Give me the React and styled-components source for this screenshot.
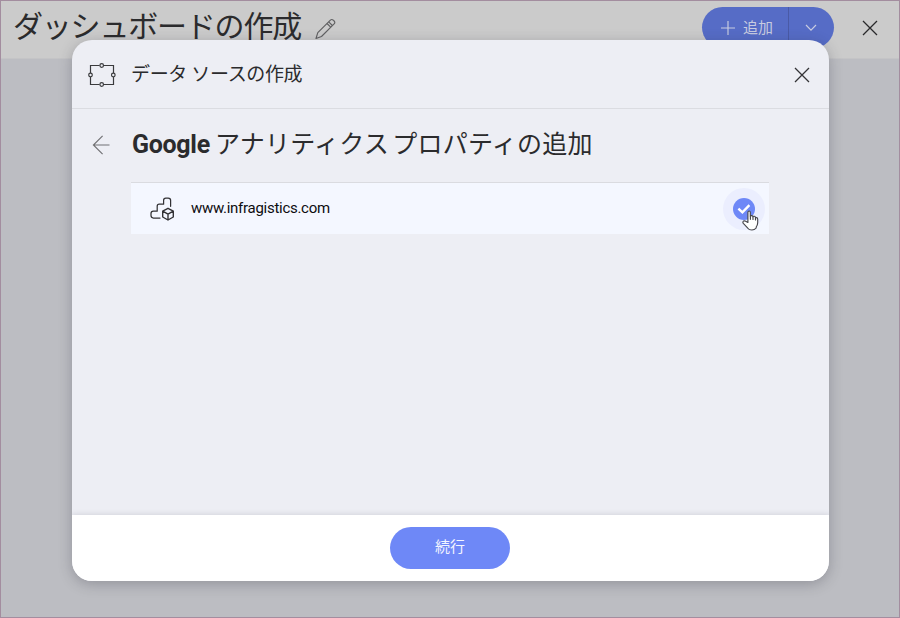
import React from "react";
import styled, { createGlobalStyle } from "styled-components";

const Global = createGlobalStyle`
  *, *::before, *::after { box-sizing: border-box; }
  body { margin: 0; font-family: Roboto, "Noto Sans CJK JP", sans-serif; color: #2b2b2d; }
`;

const Page = styled.div`
  position: relative;
  width: 900px;
  height: 618px;
  overflow: hidden;
  border: 1px solid #a38d9f;
  background: #bcbdc2;
`;

const TopBar = styled.header`
  display: flex;
  align-items: flex-start;
  height: 58px;
  padding: 0 20px 0 12px;
  background: #cbcbcb;
  border-bottom: 1px solid #c4c4c6;
`;

const Label = styled.span`
  display: block;
  white-space: nowrap;
  font-size: ${(p) => p.$size}px;
  line-height: ${(p) => p.$line}px;
  font-weight: ${(p) => p.$weight || 400};
  letter-spacing: ${(p) => p.$track || 0}px;
  word-spacing: ${(p) => p.$wordGap || 0}px;
  color: ${(p) => p.$color || "#2b2b2d"};
`;

const PageTitle = styled.h1`
  margin: 4px 0 0;
  width: 302px;
  font-weight: 400;
`;

const EditButton = styled.span`
  display: flex;
  margin-top: 17px;
`;

const SplitButton = styled.div`
  display: flex;
  width: 132px;
  height: 41px;
  margin: 6px 0 0 auto;
  border-radius: 21px;
  background: #566cc6;
  overflow: hidden;
`;

const AddPart = styled.div`
  display: flex;
  align-items: center;
  gap: 8px;
  width: 87px;
  padding-left: 19px;
  border-right: 1px solid #4a5aa6;
`;

const MenuPart = styled.div`
  display: flex;
  flex: 1;
  align-items: center;
  justify-content: center;
  padding: 1px 1px 0 0;
`;

const PageClose = styled.span`
  display: flex;
  margin: 18px 0 0 27px;
`;

const Dialog = styled.section`
  position: absolute;
  left: 71px;
  top: 39px;
  display: flex;
  flex-direction: column;
  width: 757px;
  height: 541px;
  border-radius: 20px;
  overflow: hidden;
  background: #edeef4;
  box-shadow: 0 3px 14px rgba(40, 40, 55, 0.28);
`;

const DialogHeader = styled.header`
  display: flex;
  align-items: center;
  height: 68px;
  padding: 1px 18px 0 16px;
  flex: none;
`;

const DialogTitle = styled.div`
  flex: 1;
  margin: 0 0 0 15px;
`;

const DialogBody = styled.div`
  flex: 1;
  border-top: 1px solid #dbdce1;
  padding: 16px 60px 0 19px;
`;

const Heading = styled.div`
  display: flex;
  align-items: center;
  height: 40px;
`;

const HeadingText = styled.h2`
  display: flex;
  align-items: baseline;
  gap: 5px;
  margin: -1px 0 0 21px;
`;

const PropertyRow = styled.div`
  display: flex;
  align-items: center;
  height: 52px;
  margin: 17px 0 0 40px;
  padding: 0 4px 0 19px;
  border-top: 1px solid #dadbe0;
  background: #f4f7ff;
`;

const PropertyName = styled.div`
  flex: 1;
  margin: -2px 0 0 16px;
`;

const CheckHalo = styled.div`
  position: relative;
  display: flex;
  align-items: center;
  justify-content: center;
  width: 42px;
  height: 42px;
  border-radius: 50%;
  background: #ebeefe;
`;

const Pointer = styled.svg`
  position: absolute;
  left: 19px;
  top: 22px;
`;

const DialogFooter = styled.footer`
  display: flex;
  flex: none;
  height: 66px;
  padding: 12px 2px 0 0;
  justify-content: center;
  align-items: flex-start;
  background: #fff;
  box-shadow: 0 -1px 5px rgba(60, 60, 80, 0.14);
`;

const ContinueButton = styled.button`
  display: flex;
  align-items: center;
  justify-content: center;
  width: 120px;
  height: 42px;
  padding: 0 0 3px 1px;
  border: 0;
  border-radius: 21px;
  background: #6e88f7;
  font-family: inherit;
`;

const Cross = ({ color = "#333336" }) => (
  <svg width="18" height="18" viewBox="0 0 18 18" fill="none" stroke={color} strokeWidth="1.3">
    <path d="M2 2 16 16M16 2 2 16" />
  </svg>
);

const Pencil = () => (
  <svg width="21" height="22" viewBox="0 0 21 22" fill="none" stroke="#606062" strokeWidth="1.15" strokeLinejoin="round">
    <path d="M1 20.5 2.8 14.7 15.4 2.1Q16.8.9 18.3 2.2L19.1 3Q20.5 4.5 19.1 5.9L6.5 18.5Z" />
    <path d="M13.7 3.8 17.4 7.5M12 5.5 15.7 9.2" />
  </svg>
);

const DataSourceIcon = () => (
  <svg width="28" height="26" viewBox="0 0 28 26" fill="none" stroke="#3a3a3c" strokeWidth="1.2">
    <path d="M11.5 3.5H2.5V11M2.5 15V22.5H11.5M16 22.5H25.5V15M25.5 11V3.5H16" />
    <circle cx="13.7" cy="3.5" r="1.8" />
    <circle cx="2.5" cy="13" r="1.8" />
    <circle cx="25.3" cy="13" r="1.8" />
    <circle cx="13.7" cy="22.5" r="1.8" />
  </svg>
);

const BackArrow = () => (
  <svg width="20" height="22" viewBox="0 0 20 22" fill="none" stroke="#717174" strokeWidth="1.15">
    <path d="M18.5 11H2.5M11.6 1.8 2.4 11 11.6 20.2" />
  </svg>
);

const PropertyIcon = () => (
  <svg width="25" height="24" viewBox="0 0 25 24" fill="none" stroke="#333336" strokeWidth="1.25" strokeLinejoin="round" strokeLinecap="round">
    <path d="M10 21H3.4Q1 21 1 18.6V16.6Q1 14.2 3.4 14.2H7.2V9.2Q7.2 7.2 9.2 7.2H13.6V3.2Q13.6 1 15.8 1H18.2Q20.6 1 20.6 3.2V9.3" />
    <path d="M18 11.3 23.3 14.2V20L18 23 12.7 20V14.2ZM12.7 14.2 18 17.1 23.3 14.2M18 17.1V23" strokeWidth="1.4" />
  </svg>
);

const CheckBadge = () => (
  <svg width="22" height="22" viewBox="0 0 22 22" fill="none">
    <circle cx="11" cy="11" r="11" fill="#6e88f7" />
    <path d="m5.4 10.6 4 3.7 7-7.1" stroke="#fff" strokeWidth="2.4" />
  </svg>
);

const HandPointer = () => (
  <Pointer width="17" height="21" viewBox="0 0 17 21" fill="#fff" stroke="#46464c" strokeWidth="1.15" strokeLinejoin="round" strokeLinecap="round">
    <path d="M5.9 12.5V2.4Q5.9 1 7.1 1T8.3 2.4V6.3Q8.5 5.5 9.6 5.6 10.9 5.7 11 6.8 11.3 6.1 12.3 6.3 13.4 6.5 13.5 7.7 15.5 7.1 15.7 9.3V12.5Q15.7 15 14.2 17V18Q12.5 20 9.9 20 7 20 5.8 18.2L1.3 13.4Q.4 12 1.5 11.1 2.6 10.5 3.7 11.3Z" />
    <path d="M8.4 6.5V9.3M11 7V9.5M13.5 7.8V10" fill="none" />
  </Pointer>
);

export default function App() {
  return (
    <>
      <Global />
      <Page>
        <TopBar>
          <PageTitle><Label $size={30} $line={44} $track={-1.2}>ダッシュボードの作成</Label></PageTitle>
          <EditButton><Pencil /></EditButton>
          <SplitButton>
            <AddPart>
              <svg width="14" height="14" viewBox="0 0 14 14" fill="none" stroke="#c7cbe0" strokeWidth="1.2"><path d="M0 7H14M7 0V14" /></svg>
              <Label $size={15} $line={24} $color="#c7cbe0">追加</Label>
            </AddPart>
            <MenuPart>
              <svg width="12" height="8" viewBox="0 0 12 8" fill="none" stroke="#c7cbe0" strokeWidth="1.2"><path d="m1 1 5 5.2L11 1" /></svg>
            </MenuPart>
          </SplitButton>
          <PageClose><Cross color="#29292b" /></PageClose>
        </TopBar>
        <Dialog>
          <DialogHeader>
            <DataSourceIcon />
            <DialogTitle><Label $size={19} $line={28} $track={-0.35}>データ ソースの作成</Label></DialogTitle>
            <Cross />
          </DialogHeader>
          <DialogBody>
            <Heading>
              <BackArrow />
              <HeadingText>
                <Label $size={25} $line={36} $weight={700} $track={-0.3}>Google</Label>
                <Label $size={25} $line={36} $track={0.25} $wordGap={-3}>アナリティクス プロパティの追加</Label>
              </HeadingText>
            </Heading>
            <PropertyRow>
              <PropertyIcon />
              <PropertyName><Label $size={15} $line={22} $track={-0.28} $color="#0d0d0f">www.infragistics.com</Label></PropertyName>
              <CheckHalo><CheckBadge /><HandPointer /></CheckHalo>
            </PropertyRow>
          </DialogBody>
          <DialogFooter>
            <ContinueButton><Label $size={15} $line={22} $color="#f3f5ff">続行</Label></ContinueButton>
          </DialogFooter>
        </Dialog>
      </Page>
    </>
  );
}
